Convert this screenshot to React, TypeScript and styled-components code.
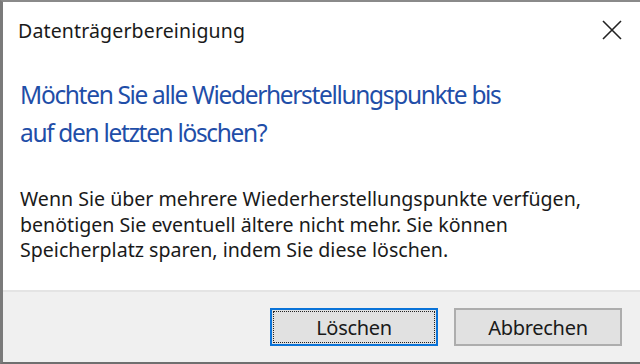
import React from 'react'
import styled, { createGlobalStyle } from 'styled-components'

const GlobalStyle = createGlobalStyle`
  html, body {
    margin: 0;
    padding: 0;
    background: #ffffff;
  }
  body {
    font-family: 'Noto Sans', 'Open Sans', sans-serif;
  }
`

const Window = styled.div`
  width: 640px;
  height: 364px;
  box-sizing: border-box;
  border-left: 3px solid #7a7a7a;
  border-top: 2px solid #8a8a8a;
  border-bottom: 2px solid #6f6f6f;
  display: flex;
  flex-direction: column;
  background: #ffffff;
`

const TitleBar = styled.header`
  height: 56px;
  display: flex;
  align-items: center;
  justify-content: space-between;
  padding: 0 16px 0 15px;
  flex-shrink: 0;

  h1 {
    margin: 0;
    font-size: 19.5px;
    font-weight: 400;
    color: #1a1a1a;
    letter-spacing: 0.15px;
  }
`

const CloseButton = styled.button`
  width: 24px;
  height: 24px;
  padding: 0;
  border: none;
  background: none;
  display: flex;
  align-items: center;
  justify-content: center;
  cursor: pointer;
`

const Content = styled.main`
  flex: 1;
  padding: 18px 20px 0 17px;
`

const Instruction = styled.h2`
  margin: 0 0 34px 0;
  font-size: 24.5px;
  font-weight: 400;
  line-height: 38px;
  color: #1f4ea8;
  letter-spacing: -1.33px;
`

const Message = styled.p`
  margin: 0;
  font-size: 19.6px;
  line-height: 25.5px;
  color: #1a1a1a;
  letter-spacing: 0px;
`

const Footer = styled.footer`
  height: 72px;
  flex-shrink: 0;
  box-sizing: border-box;
  background: #f0f0f0;
  border-top: 2px solid #e4e4e4;
  display: flex;
  align-items: center;
  justify-content: flex-end;
  gap: 16px;
  padding: 0 18px 0 0;
`

const DialogButton = styled.button<{ $default?: boolean }>`
  width: 168px;
  height: 38px;
  box-sizing: border-box;
  font-family: 'Noto Sans', 'Open Sans', sans-serif;
  font-size: 20px;
  letter-spacing: -0.3px;
  color: #1a1a1a;
  background: #e1e1e1;
  border: ${p => (p.$default ? '2px solid #0a73d8' : '2px solid #adadad')};
  outline: ${p => (p.$default ? '1px dotted #222' : 'none')};
  outline-offset: -4px;
  padding: 0;
`

export default function App() {
  return (
    <>
      <GlobalStyle />
      <Window>
        <TitleBar>
          <h1>Datenträgerbereinigung</h1>
          <CloseButton aria-label="Schließen">
            <svg width="20" height="20" viewBox="0 0 20 20">
              <path d="M1 1 L19 19 M19 1 L1 19" stroke="#222" strokeWidth="1.6" fill="none" />
            </svg>
          </CloseButton>
        </TitleBar>
        <Content>
          <Instruction>
            Möchten Sie alle Wiederherstellungspunkte bis
            <br />
            auf den letzten löschen?
          </Instruction>
          <Message>
            Wenn Sie über mehrere Wiederherstellungspunkte verfügen,
            <br />
            benötigen Sie eventuell ältere nicht mehr. Sie können
            <br />
            Speicherplatz sparen, indem Sie diese löschen.
          </Message>
        </Content>
        <Footer>
          <DialogButton $default>Löschen</DialogButton>
          <DialogButton>Abbrechen</DialogButton>
        </Footer>
      </Window>
    </>
  )
}
